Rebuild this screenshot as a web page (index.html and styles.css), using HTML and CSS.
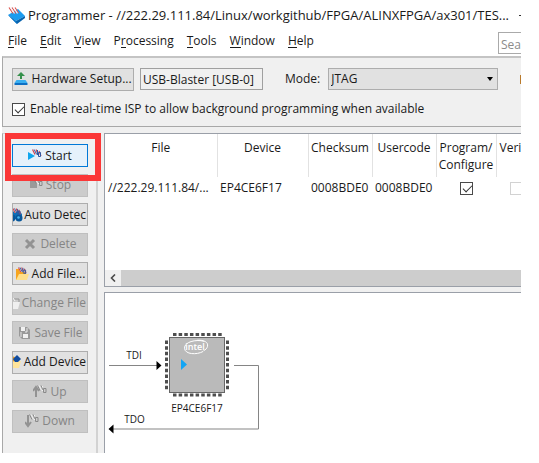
FILE: index.html
```
<!DOCTYPE html>
<html lang="en">
<head>
<meta charset="utf-8">
<meta name="viewport" content="width=device-width, initial-scale=1">
<title>Programmer</title>
<link rel="stylesheet" href="styles.css">
</head>
<body>
<svg class="defs" aria-hidden="true">
  <symbol id="bits" viewBox="0 0 10 9">
    <path d="M.5.500l2.500 5M4 .5l2 4.500M7 2l2 5" fill="none" stroke="#d0454f" stroke-width="1.200"/>
    <path d="M2.200.500l2.500 5M5.500 1v5M6.500 3.500h2v4h-2z" fill="none" stroke="#31589f" stroke-width="1"/>
  </symbol>
  <symbol id="bits-off" viewBox="0 0 10 9">
    <path d="M2.200.500l2.500 5M5.500 1v5" fill="none" stroke="#f2f2f2" stroke-width="1"/>
    <path d="M.5.500l2.500 5M4 .5l2 4.500M6.500 3.500h2.500v4h-2.500z" fill="none" stroke="#8a8a8a" stroke-width="1"/>
  </symbol>
</svg>
<div class="window">
  <header class="titlebar">
    <svg class="app-icon" viewBox="0 0 17 17" aria-hidden="true">
      <path d="M0 8l10-6 7 7-9 5z" fill="#1c9cf0"/>
      <path d="M0 8l8 6 9-5v2l-8 6z" fill="#0863ae"/>
      <path d="M0 8l8 6 1 3z" fill="#0d7bcb"/>
      <path d="M1 .5l4 6M4 .5l4 6M7 .5l3.500 5.500" stroke="#dd5550" stroke-width="1.200"/>
      <path d="M2.500.500l4 6M5.500.500l4 6" stroke="#f4f4fa" stroke-width="1.200"/>
    </svg>
    <h1>Programmer - //222.29.111.84/Linux/workgithub/FPGA/ALINXFPGA/ax301/TES...</h1>
    <button class="minimize" aria-label="Minimize"></button>
  </header>
  <nav class="menubar">
    <a href="#"><u>F</u>ile</a>
    <a href="#"><u>E</u>dit</a>
    <a href="#"><u>V</u>iew</a>
    <a href="#">P<u>r</u>ocessing</a>
    <a href="#"><u>T</u>ools</a>
    <a href="#"><u>W</u>indow</a>
    <a href="#"><u>H</u>elp</a>
    <input class="search" type="text" placeholder="Sea" aria-label="Search">
  </nav>
  <section class="settings">
    <div class="settings-row">
      <button class="btn hardware">
        <svg class="icon" viewBox="0 0 14 14" aria-hidden="true"><path d="M7 0l4 4H8v3H6V4H3z" fill="#35904b"/><path d="M2.500 8h9l2 3h-13z" fill="#38aef0"/><path d="M.5 11h13v2H.5z" fill="#0c6fc4"/></svg>
        Hardware Setup...
      </button>
      <input class="cable" type="text" value="USB-Blaster [USB-0]" aria-label="Hardware" readonly>
      <label class="mode-label" for="mode">Mode:</label>
      <span class="select-wrap"><select id="mode"><option>JTAG</option></select></span>
      <span class="progress-edge"></span>
    </div>
    <label class="isp"><input type="checkbox" checked>Enable real-time ISP to allow background programming when available</label>
  </section>
  <main class="workspace">
    <aside class="actions">
      <button class="btn start"><svg class="icon" viewBox="0 0 14 14" aria-hidden="true"><path d="M0 3l7 4-7 4z" fill="#0fa6ee"/><use href="#bits" x="4" y="0" width="10" height="9"/></svg>Start</button>
      <button class="btn" disabled><svg class="icon" viewBox="0 0 14 14" aria-hidden="true"><path d="M1 3h7v7H1z" fill="#9a9a9a"/><use href="#bits-off" x="4" y="0" width="10" height="9"/></svg>Stop</button>
      <button class="btn snug"><svg class="icon" viewBox="0 0 14 14" aria-hidden="true"><path d="M0 5l3-3 3 3 3-3 4 4v5H0z" fill="#0d6fb8"/><circle cx="3" cy="10" r="3.500" fill="#07579b"/><circle cx="10" cy="10" r="3.500" fill="#07579b"/><circle cx="2.500" cy="9.500" r="1.300" fill="#49b6ee"/><circle cx="9.500" cy="9.500" r="1.300" fill="#49b6ee"/><use href="#bits" x="3" y="0" width="10" height="8"/></svg>Auto Detec</button>
      <button class="btn" disabled><svg class="icon" viewBox="0 0 14 14" aria-hidden="true"><path d="M3 3l8 8M11 3l-8 8" stroke="#929292" stroke-width="3"/></svg>Delete</button>
      <button class="btn"><svg class="icon" viewBox="0 0 14 14" aria-hidden="true"><path d="M1 2h3l1 3h6v8H1z" fill="#f7a51e"/><use href="#bits" x="3" y="0" width="9" height="8"/><path d="M4 7h10l-2 6H1z" fill="#ffdf8b"/></svg>Add File...</button>
      <button class="btn snug" disabled><svg class="icon" viewBox="0 0 14 14" aria-hidden="true"><path d="M2 6h11l-2 7H2z" fill="#efefef"/><path d="M1 2l3 4M4 1l2 4M7 3h5v3" fill="none" stroke="#949494"/><path d="M2 2l3 4M6 2l2 3" stroke="#f5f5f5"/></svg>Change File</button>
      <button class="btn" disabled><svg class="icon" viewBox="0 0 14 14" aria-hidden="true"><path d="M2 1h8l3 3v9H5l-3-3z" fill="#999"/><path d="M4 1h4v4H4zM6 8h5v4H6z" fill="#f0f0f0"/><path d="M10 2v4H8M4 6v5" fill="none" stroke="#e8e8e8"/></svg>Save File</button>
      <button class="btn snug"><svg class="icon" viewBox="0 0 14 14" aria-hidden="true"><path d="M1 6h11l-2 7H1z" fill="#ffe49a"/><circle cx="4" cy="4" r="2.500" fill="#ef9a18"/><path d="M4 4l4-4 4 4-3 3H6z" fill="#124c9e"/></svg>Add Device</button>
      <button class="btn" disabled><svg class="icon" viewBox="0 0 14 14" aria-hidden="true"><path d="M3 12V3M0 6l3-4 3 4" fill="none" stroke="#929292" stroke-width="2"/><use href="#bits-off" x="4" y="0" width="10" height="9"/></svg>Up</button>
      <button class="btn" disabled><svg class="icon" viewBox="0 0 14 14" aria-hidden="true"><path d="M3 1v10M0 8l3 4 3-4" fill="none" stroke="#929292" stroke-width="2"/><use href="#bits-off" x="4" y="0" width="10" height="9"/></svg>Down</button>
      <div class="highlight"></div>
    </aside>
    <div class="panes">
      <section class="files">
        <table>
          <colgroup><col><col class="c-device"><col class="c-code"><col class="c-code"><col class="c-program"><col class="c-verify"></colgroup>
          <thead>
            <tr><th>File</th><th>Device</th><th>Checksum</th><th>Usercode</th><th>Program/<br>Configure</th><th>Veri</th></tr>
          </thead>
          <tbody>
            <tr><td>//222.29.111.84/...</td><td>EP4CE6F17</td><td>0008BDE0</td><td>0008BDE0</td><td class="tick"><input type="checkbox" checked aria-label="Program/Configure"></td><td class="tick-cut"><input type="checkbox" disabled aria-label="Verify"></td></tr>
          </tbody>
        </table>
        <div class="scrollbar">
          <button aria-label="Scroll left"><svg viewBox="0 0 6 8" aria-hidden="true"><path d="M5 .5L1.500 4 5 7.500" fill="none" stroke="#4a4a4a" stroke-width="1.600"/></svg></button>
          <div class="thumb"></div>
        </div>
      </section>
      <section class="chain">
        <svg class="diagram" viewBox="105 293 200 160" role="img" aria-label="JTAG chain">
          <path d="M109 365.500h49M234 365.500h24.500v63.500H112" fill="none" stroke="#858585"/>
          <path d="M156.500 361l5 4.500-5 4.500zM113.500 424.500l-5 4.500 5 4.500z" fill="#000"/>
          <path d="M173 334.500h49M173 395h49" stroke="#4e4e4e" stroke-width="3" stroke-dasharray="3.500 2.150" fill="none"/>
          <path d="M166.500 340.500v49M227.500 340.500v49" stroke="#4e4e4e" stroke-width="3" stroke-dasharray="3.500 2.150" fill="none"/>
          <rect x="169.500" y="337.500" width="55" height="55" fill="#bababa" stroke="#666"/>
          <path d="M181 359l6 5.500-6 5.500z" fill="#13a5f4"/>
          <path d="M204 341.300c-8-2.300-20 .7-19.500 7 .4 6.300 12.500 6.700 18.500 3.200M197 340.300c7-.6 11.500 2 10.500 6-.4 2-2 3.500-4 4.500" fill="none" stroke="#fff" stroke-width="1"/>
          <text class="brand" x="195" y="350">intel</text>
          <text x="134" y="359">TDI</text>
          <text x="134.500" y="423">TDO</text>
          <text x="197" y="412">EP4CE6F17</text>
        </svg>
      </section>
    </div>
  </main>
</div>
</body>
</html>
```
FILE: styles.css
```
* { box-sizing: border-box; }
body {
  margin: 0;
  background: #fff;
  color: #1a1a1a;
  font: 12px/16px "Open Sans", "Noto Sans", sans-serif;
}
button, input, select { font: inherit; color: inherit; }
.defs { display: none; }

.window {
  display: flex;
  flex-direction: column;
  min-height: calc(100vh - 10px);
  margin: 0 18px 10px 0;
  overflow: hidden;
}

.titlebar {
  display: flex;
  align-items: center;
  height: 30px;
  padding-left: 8px;
}
.app-icon { flex: none; width: 17px; height: 17px; margin-right: 3px; }
h1 {
  flex: 1;
  margin: 0;
  font-size: 13px;
  font-weight: 400;
  line-height: 20px;
  white-space: nowrap;
}
.minimize { width: 2px; height: 1px; padding: 0; border: 0; background: #333; }

.menubar {
  display: flex;
  align-items: center;
  gap: 13px;
  height: 26px;
  padding-left: 8px;
}
.menubar a { margin-bottom: 4px; color: inherit; text-decoration: none; }
.menubar u {
  display: inline-block;
  border-bottom: 1px solid #1a1a1a;
  line-height: 12px;
  text-decoration: none;
}
.search {
  width: 23px;
  height: 22px;
  margin-left: auto;
  padding: 2px 0 0 2px;
  border: 1px solid #aaa;
  border-right: 0;
  background: #fff;
}
.search::placeholder { color: #8b8b8b; opacity: 1; }

.settings {
  border: 1px solid #a8a8a8;
  border-top: 2px solid #c4c4c4;
  border-right: 0;
  margin-left: 2px;
  padding: 10px 0 9px 9px;
  background: #f0f0f0;
}
.settings-row { display: flex; align-items: center; height: 22px; }
.btn {
  display: flex;
  align-items: center;
  justify-content: center;
  gap: 3px;
  height: 23px;
  padding: 0;
  border: 1px solid #adadad;
  background: #e1e1e1;
  white-space: nowrap;
  overflow: hidden;
}
.btn:disabled { border-color: #bfbfbf; background: #ccc; color: #858585; }
.snug { justify-content: flex-end; gap: 1px; padding-right: 1px; }
.icon { flex: none; width: 14px; height: 14px; }
.hardware { width: 122px; margin-right: 6px; }
.cable {
  width: 123px;
  height: 22px;
  padding: 0 2px;
  border: 1px solid #a0a0a0;
  background: #f0f0f0;
}
.mode-label { margin: 0 8px 0 22px; }
.select-wrap { position: relative; flex: 1; }
.select-wrap::after {
  content: "";
  position: absolute;
  top: 9px;
  right: 5px;
  border: 3px solid transparent;
  border-top: 4px solid #000;
  border-bottom: 0;
}
select {
  display: block;
  width: 100%;
  height: 22px;
  padding: 0 2px;
  border: 1px solid #adadad;
  border-radius: 0;
  background: #e1e1e1;
  appearance: none;
}
.progress-edge { width: 1px; height: 9px; margin-left: 22px; background: #b97a2c; }
.isp { display: flex; align-items: center; gap: 5px; margin-top: 11px; height: 16px; white-space: nowrap; }
input[type="checkbox"] {
  flex: none;
  appearance: none;
  width: 13px;
  height: 13px;
  margin: 0;
  border: 1px solid #4a4a4a;
  background: #fff;
}
input[type="checkbox"]:checked::after {
  content: "";
  display: block;
  width: 8px;
  height: 4px;
  margin: 2px 0 0 2px;
  border-left: 1px solid #333;
  border-bottom: 1px solid #333;
  transform: rotate(-45deg);
}
input[type="checkbox"]:disabled { border-color: #d2d2d2; }

.workspace {
  display: flex;
  flex: 1;
  margin-left: 2px;
  padding-top: 6px;
  background: #f0f0f0;
}
.actions {
  position: relative;
  display: flex;
  flex-direction: column;
  justify-content: space-between;
  width: 96px;
  padding: 10px 8px 20px 9px;
  border: 1px solid #a8a8a8;
  border-top-color: #d0d0d0;
  border-right: 2px solid #d2d2d2;
  border-bottom: 0;
}
.start { border-color: #0078d7; background: #e5f1fb; }
.highlight {
  position: absolute;
  top: -1px;
  left: 2px;
  width: 96px;
  height: 48px;
  border: 6px solid #fb3737;
  pointer-events: none;
}

.panes { display: flex; flex: 1; flex-direction: column; gap: 5px; min-width: 0; margin-left: 6px; }
.files {
  display: flex;
  flex-direction: column;
  height: 154px;
  border: 1px solid #9a9fa8;
  border-right: 0;
  background: #fff;
}
table { width: 100%; table-layout: fixed; border-collapse: collapse; }
.c-device { width: 91px; }
.c-code { width: 64px; }
.c-program { width: 60px; }
.c-verify { width: 25px; }
th {
  height: 43px;
  padding: 5px 0 0;
  border-right: 1px solid #e2e2e2;
  font-weight: 400;
  line-height: 17px;
  vertical-align: top;
}
th:last-child { padding-left: 3px; border-right: 0; text-align: left; }
td { height: 22px; padding: 0 0 0 3px; white-space: nowrap; }
td.tick { padding: 0; }
.tick input, .tick-cut input { display: block; margin: 0 auto; }
td.tick-cut { overflow: hidden; padding-left: 14px; }
.scrollbar { display: flex; height: 16px; margin-top: auto; background: #f0f0f0; }
.scrollbar button { display: flex; align-items: center; justify-content: center; width: 16px; padding: 0; border: 0; background: none; }
.scrollbar svg { width: 6px; height: 8px; }
.thumb { flex: 1; background: #cdcdcd; }

.chain {
  flex: 1;
  border: 1px solid #9a9fa8;
  border-right: 0;
  border-bottom: 0;
  background: #fff;
}
.diagram { display: block; width: 200px; height: 160px; font-size: 10px; text-anchor: middle; fill: #1a1a1a; }
.brand { fill: #fff; font-size: 9px; font-weight: 600; }
```
